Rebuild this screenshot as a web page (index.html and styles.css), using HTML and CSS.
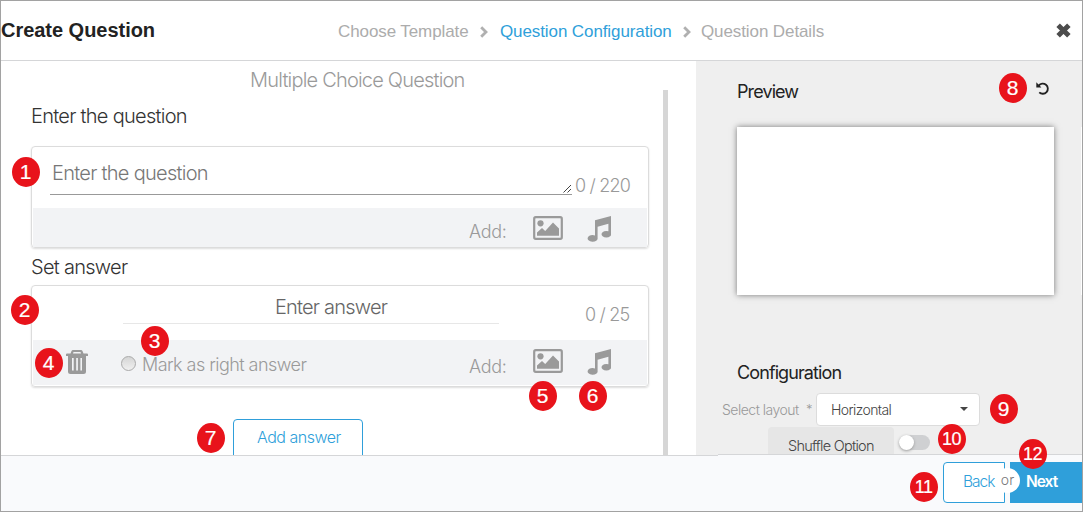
FILE: index.html
```html
<!DOCTYPE html>
<html lang="en">
<head>
<meta charset="utf-8">
<title>Create Question</title>
<link rel="stylesheet" href="styles.css">
</head>
<body>
<svg class="defs" width="0" height="0">
  <symbol id="image" viewBox="0 0 30 24"><rect x="1.2" y="1.2" width="27.6" height="21.6" rx="1.5" fill="none" stroke="currentColor" stroke-width="2.2"/><circle cx="7.5" cy="7.3" r="3.1"/><path d="M4 19.800v-3.200l5-4.600 3.200 3 7.800-8.400 6 6v7.200z"/></symbol>
  <symbol id="music" viewBox="0 0 24 26"><path d="M8 4.200 24 0v17.500a4.800 3.300 0 1 1-2.600-2.200V7.800L10.600 10.700V22a5 3.300 0 1 1-2.600-2.500z"/></symbol>
  <symbol id="trash" viewBox="0 0 22 24"><path fill-rule="evenodd" d="M7 0h8q1 0 1.500 1L17.500 3.500H21q1 0 1 1V6h-2v15.500q0 2.500-2.500 2.500h-13Q2 24 2 21.500V6H0V4.500q0-1 1-1h3.500L5.500 1Q6 0 7 0zM7.500 2 7 3.500h8L14.500 2zM6 8v12.500h1.700V8zm4.200 0v12.500h1.700V8zm4.200 0v12.500H16V8z"/></symbol>
</svg>
<div class="window">
  <header class="header">
    <h1 class="title">Create Question</h1>
    <nav class="steps">
      <span class="step step-a">Choose Template</span>
      <svg class="chev" viewBox="0 0 8 12"><path d="M1.200 1.200 6 6 1.200 10.800"/></svg>
      <span class="step step-b active">Question Configuration</span>
      <svg class="chev" viewBox="0 0 8 12"><path d="M1.200 1.200 6 6 1.200 10.800"/></svg>
      <span class="step step-c">Question Details</span>
    </nav>
    <svg class="close" viewBox="0 0 14 14"><path d="M2 2 12 12M12 2 2 12"/></svg>
  </header>
  <div class="body">
    <main class="editor">
      <div class="kind"><span>Multiple Choice Question</span></div>
      <div class="scroll">
        <h2 class="label label-q">Enter the question</h2>
        <section class="card card-q">
          <div class="field-row">
            <div class="textarea"><span class="ph-q">Enter the question</span>
              <svg class="grip" viewBox="0 0 9 9"><path d="M.5 8.500 8 1M4.500 8.500 8 5"/></svg>
            </div>
            <span class="count count-q">0 / 220</span>
          </div>
          <div class="tools">
            <span class="add">Add:</span>
            <svg class="i-image"><use href="#image"/></svg>
            <svg class="i-music"><use href="#music"/></svg>
          </div>
        </section>
        <h2 class="label label-a">Set answer</h2>
        <section class="card card-a">
          <div class="field-row">
            <div class="input"><span class="ph-a">Enter answer</span></div>
            <span class="count count-a">0 / 25</span>
          </div>
          <div class="tools">
            <svg class="i-trash"><use href="#trash"/></svg>
            <span class="radio"></span><span class="mark">Mark as right answer</span>
            <span class="add">Add:</span>
            <svg class="i-image"><use href="#image"/></svg>
            <svg class="i-music"><use href="#music"/></svg>
          </div>
        </section>
        <div class="add-answer"><span>Add answer</span></div>
      </div>
    </main>
    <aside class="side">
      <div class="side-head"><h3 class="preview-title">Preview</h3>
        <svg class="undo" viewBox="0 0 12 12"><path class="arc" d="M2.500 3.300A4.700 4.700 0 1 1 3 9.600"/><path class="tip" d="M.3.300v4.700H5z"/></svg>
      </div>
      <div class="preview"></div>
      <h3 class="config-title">Configuration</h3>
      <div class="layout-row"><span class="select-label">Select layout</span><span class="star">*</span>
        <div class="select"><span>Horizontal</span><i class="caret"></i></div>
      </div>
      <div class="shuffle-row"><div class="shuffle"><span>Shuffle Option</span></div><div class="toggle"></div></div>
    </aside>
  </div>
  <footer class="footer">
    <div class="back"><span>Back</span></div>
    <div class="next"><span>Next</span></div>
    <span class="or">or</span>
  </footer>
  <div class="edge"></div>
</div>
<b class="badge b1">1</b><b class="badge b2">2</b><b class="badge b3">3</b><b class="badge b4">4</b><b class="badge b5">5</b><b class="badge b6">6</b><b class="badge b7">7</b><b class="badge b8">8</b><b class="badge b9">9</b><b class="badge b10">10</b><b class="badge b11">11</b><b class="badge b12">12</b>
</body>
</html>
```
FILE: styles.css
```css
* { box-sizing: border-box; }
body { margin: 0; width: 1083px; height: 512px; overflow: hidden; position: relative; background: #fff; font-family: Inter, "Liberation Sans", sans-serif; font-weight: 300; white-space: nowrap; }
h1, h2, h3 { margin: 0; font-weight: 300; }
.defs { position: absolute; }
svg { fill: currentColor; flex: none; display: block; }
.window { position: relative; display: flex; flex-direction: column; width: 1083px; height: 512px; border: 1px solid #a2a2a2; }
.header { display: flex; height: 60px; border-bottom: 1px solid #d5d6d8; font-family: "Liberation Sans", Arial, sans-serif; }
.title { width: 337px; padding-top: 17px; font-size: 20px; line-height: 24px; font-weight: 700; color: #222; letter-spacing: -.03px; }
.steps { display: flex; width: 718px; padding-top: 21px; font-size: 17px; line-height: 20px; font-weight: 400; color: #acacac; letter-spacing: -.1px; }
.step-a { width: 142px; }
.step-b { width: 183px; }
.active { color: #2f9fda; }
.chev { width: 8px; height: 12px; margin: 4px 12px 0 0; fill: none; stroke: #b0b0b0; stroke-width: 2.8; }
.step-b + .chev { margin-right: 10px; }
.close { width: 15px; height: 15px; margin-top: 22px; stroke: #4c4c4c; stroke-width: 4.6; fill: none; }
.body { display: flex; height: 394px; overflow: hidden; }
.editor { width: 695px; height: 394px; }
.kind { height: 29px; padding: 6px 0 0 249px; font-size: 20px; line-height: 26px; color: #9a9a9a; letter-spacing: -.8px; }
.scroll { width: 667px; height: 365px; overflow: hidden; border-right: 5px solid #d6d6d6; }
.label { height: 56px; padding: 13px 0 0 30px; font-size: 20px; line-height: 26px; color: #333; letter-spacing: -.72px; }
.label-a { height: 37px; padding-top: 6px; }
.card { width: 618px; margin-left: 30px; border: 1px solid #dcdcdc; border-radius: 4px; padding: 0 1px 1px; box-shadow: 0 1px 2px #ddd; }
.card-q { height: 102px; }
.card-a { height: 102px; }
.field-row { display: flex; height: 61px; padding-left: 17px; }
.textarea { display: flex; justify-content: space-between; width: 522px; height: 48px; border-bottom: 1px solid #999; padding: 13px 0 0 2px; font-size: 20px; line-height: 26px; color: #777; letter-spacing: -.72px; }
.grip { width: 9px; height: 9px; margin-top: 24px; stroke: #444; stroke-width: 1; fill: none; }
.count { padding: 28px 0 0 3px; font-size: 18px; line-height: 22px; color: #999; letter-spacing: -.8px; }
.tools { display: flex; height: 38px; background: #f2f3f5; color: #9a9a9a; }
.card-q .tools { height: 39px; padding-left: 436px; }
.add { width: 64px; padding-top: 13px; font-size: 18px; line-height: 22px; letter-spacing: -.3px; }
.i-image { width: 30px; height: 24px; margin-top: 8px; }
.i-music { width: 24px; height: 26px; margin: 8px 0 0 24px; }
.card-a .field-row { height: 54px; padding-left: 90px; }
.input { width: 376px; height: 38px; padding: 8px 0 0 152px; border-bottom: 1px solid #e7e7e7; font-size: 20px; line-height: 26px; color: #666; letter-spacing: -.8px; }
.count-a { padding: 18px 0 0 86px; }
.card-a .tools { height: 45px; padding-left: 33px; }
.i-trash { width: 22px; height: 24px; margin-top: 10px; }
.radio { width: 15px; height: 15px; margin: 16px 6px 0 33px; border: 1px solid #aaa; border-radius: 50%; background: linear-gradient(#d5d5d5, #f0f0f0); }
.mark { width: 327px; padding-top: 14px; font-size: 18px; line-height: 22px; letter-spacing: -.55px; }
.card-a .add { padding-top: 16px; }
.card-a .i-image { margin-top: 9px; }
.card-a .i-music { margin-top: 9px; }
.add-answer { width: 130px; height: 40px; margin: 32px 0 0 232px; padding: 6px 0 0 23px; border: 1px solid #2f9fda; border-radius: 4px; font-size: 16px; line-height: 22px; color: #2f9fda; letter-spacing: -.5px; }
.side { width: 386px; background: #efefef; color: #222; }
.side-head { display: flex; height: 66px; padding: 20px 0 0 41px; }
.preview-title { width: 299px; font-size: 18px; line-height: 22px; letter-spacing: -.9px; font-weight: 400; }
.undo { width: 13px; height: 13px; margin-top: 1px; color: #222; }
.arc { fill: none; stroke: #222; stroke-width: 1.700; }
.preview { width: 317px; height: 168px; margin-left: 41px; background: #fff; box-shadow: 0 0 6px #777; }
.config-title { height: 98px; padding: 67px 0 0 41px; font-size: 18px; line-height: 22px; letter-spacing: -.9px; font-weight: 400; }
.layout-row { display: flex; height: 33px; padding-left: 26px; font-size: 14px; line-height: 18px; color: #999; }
.select-label { width: 84px; padding-top: 8px; letter-spacing: -.5px; }
.star { width: 10px; padding-top: 7px; font-size: 13px; }
.select { display: flex; width: 164px; height: 33px; border: 1px solid #dcdcdc; border-radius: 4px; background: #fff; color: #444; padding: 7px 0 0 14px; }
.select span { width: 129px; letter-spacing: -.6px; }
.caret { width: 0; height: 0; margin-top: 6px; border: 4px solid transparent; border-top-color: #444; border-bottom: 0; }
.shuffle-row { display: flex; height: 31px; padding: 1px 0 0 72px; overflow: hidden; }
.shuffle { width: 126px; height: 36px; padding: 9px 0 0 20px; border-radius: 4px; background: #e6e6e6; color: #444; font-size: 14.5px; line-height: 20px; letter-spacing: -.75px; }
.toggle { width: 31px; height: 15px; margin: 8px 0 0 5px; border-radius: 8px; background: #cfd0d2; }
.toggle::before { content: ""; display: block; width: 15px; height: 15px; border-radius: 50%; background: #fff; box-shadow: 0 1px 3px #999; }
.footer { position: relative; display: flex; height: 56px; padding: 6px 0 0 942px; border-top: 1px solid #d5d6d8; background: #f9fafc; font-size: 15.5px; line-height: 20px; }
.footer::before { content: ""; position: absolute; left: 717px; right: 0; top: -2px; height: 2px; border-top: 1px solid #d5d6d8; background: #f9fafc; }
.back { width: 62px; height: 41px; padding: 9px 0 0 19px; border: 1px solid #2f9fda; border-radius: 4px 0 0 4px; color: #2f9fda; background: #fff; letter-spacing: -1px; }
.next { width: 72px; height: 41px; margin-left: 5px; padding: 10px 0 0 16px; background: #2f9fda; color: #fff; font-weight: 600; letter-spacing: -1px; }
.or { position: absolute; left: 994px; top: 12px; width: 25px; height: 25px; border-radius: 50%; background: #fff; color: #777; font-size: 14px; line-height: 23px; text-align: center; }
.edge { position: absolute; right: 0; top: 126px; width: 1px; height: 168px; background: #fff; }
.badge { position: absolute; width: 28px; height: 30px; margin-left: -.4px; border-radius: 50%; background: #e8131b; color: #fff; font: 400 21px/30px "Liberation Sans", Arial, sans-serif; text-align: center; -webkit-text-stroke: .2px #fff; }
.b1 { left: 12px; top: 157px; }
.b2 { left: 11px; top: 295px; }
.b3 { left: 141px; top: 326px; }
.b4 { left: 35px; top: 348px; }
.b5 { left: 529px; top: 381px; }
.b6 { left: 579px; top: 381px; }
.b7 { left: 197px; top: 423px; }
.b8 { left: 999px; top: 73px; }
.b9 { left: 990px; top: 394px; }
.b10, .b11, .b12 { font-size: 18px; letter-spacing: -.5px; }
.b10 { left: 938px; top: 424px; }
.b11 { left: 910px; top: 472px; }
.b12 { left: 1019px; top: 439px; }
```
